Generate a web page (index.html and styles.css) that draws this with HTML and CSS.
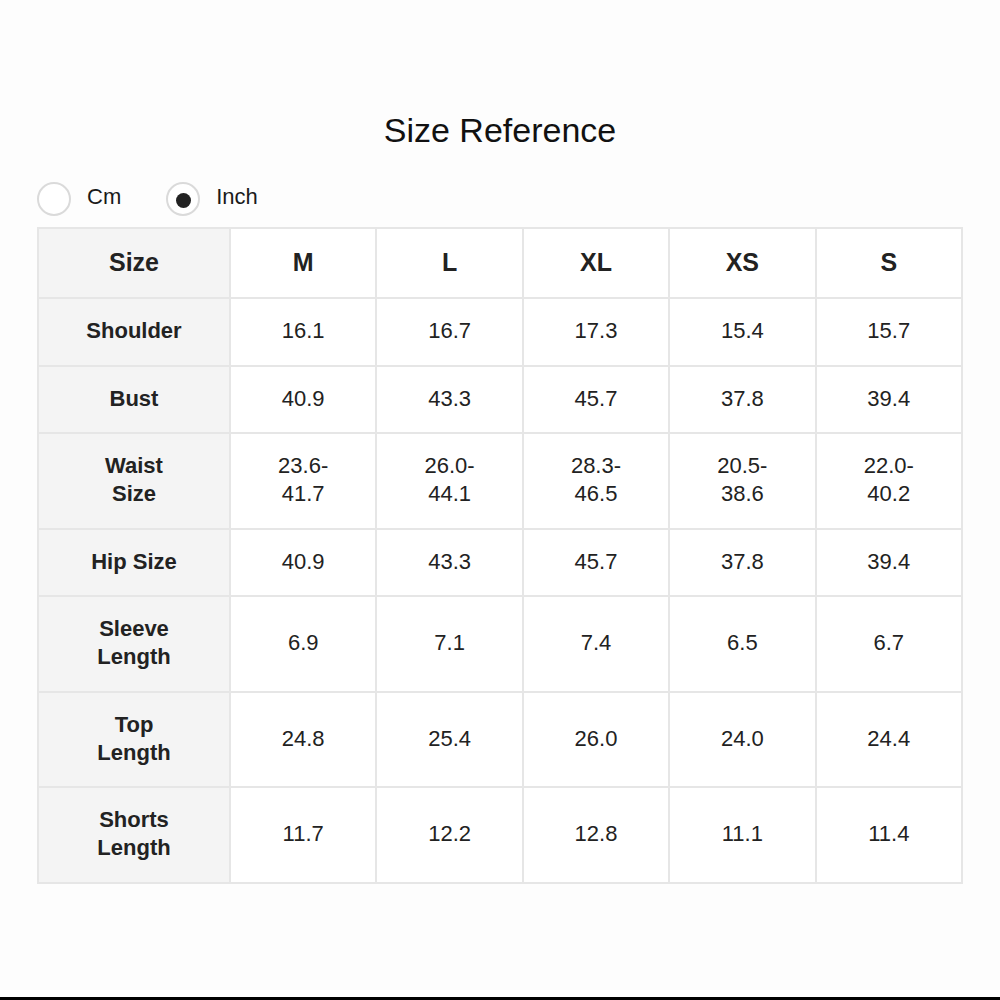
FILE: index.html
```html
<!DOCTYPE html>
<html lang="en">
<head>
<meta charset="utf-8">
<title>Size Reference</title>
<link rel="stylesheet" href="styles.css">
</head>
<body>
<div class="page">
  <h1 class="title">Size Reference</h1>
  <div class="units">
    <label class="unit"><span class="radio"></span><span class="unit-label">Cm</span></label>
    <label class="unit"><span class="radio checked"></span><span class="unit-label">Inch</span></label>
  </div>
  <table class="sizes">
    <colgroup>
      <col class="col-head">
      <col><col><col><col><col>
    </colgroup>
    <thead>
      <tr><th class="rowhead">Size</th><th>M</th><th>L</th><th>XL</th><th>XS</th><th>S</th></tr>
    </thead>
    <tbody>
      <tr><th class="rowhead">Shoulder</th><td>16.1</td><td>16.7</td><td>17.3</td><td>15.4</td><td>15.7</td></tr>
      <tr><th class="rowhead">Bust</th><td>40.9</td><td>43.3</td><td>45.7</td><td>37.8</td><td>39.4</td></tr>
      <tr><th class="rowhead">Waist<br>Size</th><td>23.6-<br>41.7</td><td>26.0-<br>44.1</td><td>28.3-<br>46.5</td><td>20.5-<br>38.6</td><td>22.0-<br>40.2</td></tr>
      <tr><th class="rowhead">Hip Size</th><td>40.9</td><td>43.3</td><td>45.7</td><td>37.8</td><td>39.4</td></tr>
      <tr><th class="rowhead">Sleeve<br>Length</th><td>6.9</td><td>7.1</td><td>7.4</td><td>6.5</td><td>6.7</td></tr>
      <tr><th class="rowhead">Top<br>Length</th><td>24.8</td><td>25.4</td><td>26.0</td><td>24.0</td><td>24.4</td></tr>
      <tr><th class="rowhead">Shorts<br>Length</th><td>11.7</td><td>12.2</td><td>12.8</td><td>11.1</td><td>11.4</td></tr>
    </tbody>
  </table>
</div>
<div class="bottom-bar"></div>
</body>
</html>
```
FILE: styles.css
```css
html, body {
  margin: 0;
  padding: 0;
  background: #fdfdfd;
}
body {
  font-family: "Liberation Sans", Arial, sans-serif;
  color: #1e1e1e;
  height: 1000px;
  position: relative;
  overflow: hidden;
}
.page {
  padding: 110px 37px 0 37px;
}
.title {
  margin: 0;
  font-size: 34px;
  font-weight: normal;
  line-height: 40px;
  text-align: center;
  color: #111;
}
.units {
  display: flex;
  align-items: center;
  margin-top: 32px;
  height: 34px;
  gap: 45px;
}
.unit {
  display: flex;
  align-items: center;
  gap: 16px;
}
.radio {
  width: 30px;
  height: 30px;
  border: 2px solid #dadada;
  border-radius: 50%;
  display: flex;
  align-items: center;
  justify-content: center;
  background: #fff;
}
.radio.checked::after {
  content: "";
  width: 15px;
  height: 15px;
  border-radius: 50%;
  background: #222;
  margin-top: 3px;
}
.unit-label {
  font-size: 22px;
  line-height: 28px;
  color: #1a1a1a;
  margin-top: -4px;
}
.sizes {
  margin-top: 11px;
  width: 926px;
  border-collapse: collapse;
  table-layout: fixed;
}
.col-head {
  width: 192px;
}
.sizes th, .sizes td {
  border: 2px solid #e6e6e6;
  text-align: center;
  vertical-align: middle;
  font-size: 22px;
  line-height: 28px;
  padding: 18px 4px 19.5px;
}
.sizes td {
  font-weight: normal;
  background: #fff;
  color: #222;
}
.sizes th {
  font-weight: bold;
  color: #222;
  background: #fff;
}
.sizes thead th {
  font-size: 25px;
  line-height: 30px;
  padding: 18px 4px 20px;
}
.sizes th.rowhead {
  background: #f4f4f4;
}
.bottom-bar {
  position: absolute;
  left: 0;
  right: 0;
  bottom: 0;
  height: 3px;
  background: #000;
}
```
